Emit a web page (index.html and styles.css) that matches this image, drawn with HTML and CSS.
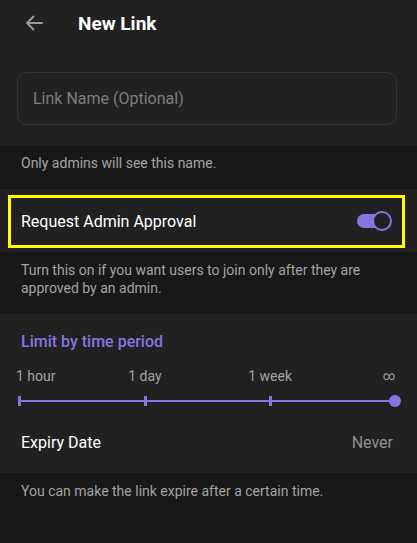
FILE: index.html
```html
<!DOCTYPE html>
<html>
<head>
<meta charset="utf-8">
<link rel="stylesheet" href="styles.css">
</head>
<body>
<div class="section top">
  <div class="header">
    <svg class="back" width="18" height="16" viewBox="0 0 18 16"><path d="M17 8H2M8.5 1.5L2 8l6.5 6.5" fill="none" stroke="#9a9a9a" stroke-width="2" stroke-linecap="round" stroke-linejoin="round"/></svg>
    <div class="title">New Link</div>
  </div>
  <div class="field">Link Name (Optional)</div>
</div>
<div class="hint hint1">Only admins will see this name.</div>

<div class="section approval">
  <div class="approval-box">
    <span class="row-label">Request Admin Approval</span>
    <span class="toggle"><span class="knob"></span></span>
  </div>
</div>
<div class="hint hint2">Turn this on if you want users to join only after they are approved by an admin.</div>

<div class="section limit">
  <div class="limit-title">Limit by time period</div>
  <div class="ticks-labels">
    <span class="lbl first">1 hour</span>
    <span class="lbl" style="left:33.5%">1 day</span>
    <span class="lbl" style="left:66.8%">1 week</span>
    <span class="lbl last">∞</span>
  </div>
  <div class="slider">
    <span class="line"></span>
    <span class="tick" style="left:0%"></span>
    <span class="tick" style="left:33.5%"></span>
    <span class="tick" style="left:66.8%"></span>
    <span class="thumb"></span>
  </div>
  <div class="expiry">
    <span class="row-label">Expiry Date</span>
    <span class="never">Never</span>
  </div>
</div>
<div class="hint hint3">You can make the link expire after a certain time.</div>
</body>
</html>
```
FILE: styles.css
```css
html, body {
  margin: 0;
  padding: 0;
  background: #181818;
  font-family: Roboto, "Noto Sans", sans-serif;
  color: #fff;
  width: 417px;
  height: 543px;
  overflow: hidden;
}
.section {
  background: #212121;
}
.top {
  padding-bottom: 21px;
}
.header {
  height: 48px;
  display: flex;
  align-items: center;
}
.back {
  margin-left: 25px;
  margin-top: -2px;
}
.title {
  margin-left: 35px;
  font-size: 19px;
  font-weight: 700;
  margin-top: -1px;
}
.field {
  margin: 24px 20px 0 17px;
  height: 51px;
  border: 1px solid #333333;
  border-radius: 10px;
  display: flex;
  align-items: center;
  padding-left: 15px;
  font-size: 16px;
  color: #7d7d7d;
}
.hint {
  font-size: 14px;
  line-height: 18px;
  color: #a3a3a3;
  padding: 0 21px;
}
.hint1 {
  padding-top: 8px;
  padding-bottom: 17px;
}
.approval {
  padding: 6px 12px 4px 8px;
}
.approval-box {
  height: 47px;
  border: 3px solid #ffff00;
  display: flex;
  align-items: center;
  justify-content: space-between;
  padding: 0 11px 0 10px;
}
.row-label {
  font-size: 16px;
  color: #fff;
}
.toggle {
  position: relative;
  width: 34px;
  height: 14px;
  border-radius: 7px;
  background: #8774e1;
  margin-top: -1px;
}
.knob {
  position: absolute;
  right: -1px;
  top: -3px;
  width: 16px;
  height: 16px;
  border-radius: 50%;
  border: 2px solid #8774e1;
  background: #212121;
}
.hint2 {
  padding-top: 9px;
  padding-bottom: 17px;
  padding-right: 12px;
}
.limit {
  padding-top: 18px;
  padding-bottom: 7px;
}
.limit-title {
  padding-left: 21px;
  font-size: 16px;
  line-height: 20px;
  font-weight: 500;
  color: #8774e1;
}
.ticks-labels {
  position: relative;
  margin: 15px 22px 0 19px;
  height: 18px;
  font-size: 14px;
  line-height: 18px;
  color: #a3a3a3;
}
.lbl {
  position: absolute;
  top: 0;
  transform: translateX(-50%);
  white-space: nowrap;
}
.lbl.first {
  left: -3px;
  transform: none;
}
.lbl.last {
  right: 0;
  font-size: 12px;
  transform: none;
}
.slider {
  position: relative;
  margin: 6px 22px 0 19px;
  height: 20px;
}
.line {
  position: absolute;
  left: 0;
  right: 0;
  top: 9px;
  height: 2px;
  background: #8774e1;
}
.tick {
  position: absolute;
  top: 5px;
  width: 3px;
  height: 10px;
  margin-left: -1px;
  background: #8774e1;
}
.thumb {
  position: absolute;
  right: -6px;
  top: 4px;
  width: 12px;
  height: 12px;
  border-radius: 50%;
  background: #8774e1;
}
.expiry {
  height: 48px;
  margin-top: 7px;
  display: flex;
  align-items: center;
  justify-content: space-between;
  padding: 0 24px 0 21px;
}
.never {
  font-size: 16px;
  color: #8e8e8e;
}
.hint3 {
  padding-top: 9px;
}
```
